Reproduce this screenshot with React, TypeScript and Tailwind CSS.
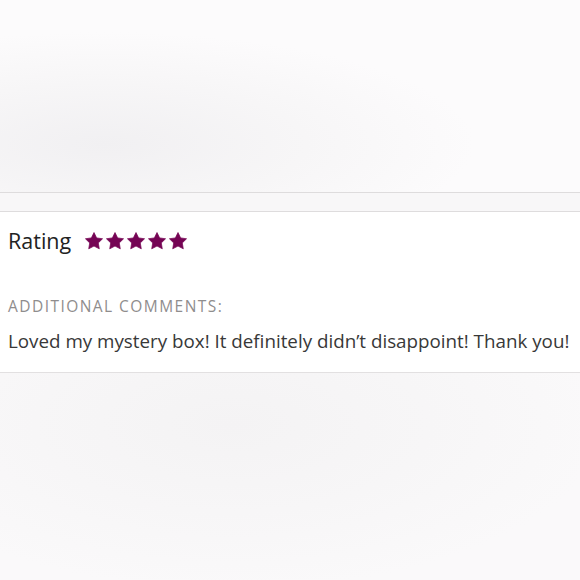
const font = { fontFamily: '"Open Sans", "Liberation Sans", Arial, sans-serif' }

// five-point star, fairly plump
const starPoints = Array.from({ length: 10 }, (_, i) => {
  const r = i % 2 === 0 ? 10 : 5
  const a = (Math.PI / 5) * i - Math.PI / 2
  return `${(10 + r * Math.cos(a)).toFixed(2)},${(10.6 + r * Math.sin(a)).toFixed(2)}`
}).join(' ')

function Stars() {
  return (
    <div className="flex items-center gap-[3px]">
      {[0, 1, 2, 3, 4].map((i) => (
        <svg key={i} width="18" height="18" viewBox="0 0 20 20" className="text-[#750454]">
          <polygon fill="currentColor" stroke="currentColor" strokeWidth="0.8" strokeLinejoin="round" points={starPoints} />
        </svg>
      ))}
    </div>
  )
}

export default function App() {
  return (
    <div className="w-[580px] h-[580px] overflow-hidden flex flex-col bg-[#faf9fa]" style={font}>
      <div className="h-[192px] bg-[radial-gradient(ellipse_at_18%_75%,#f1f0f2_0%,#f7f6f7_30%,#fcfbfc_55%)]" />
      <div className="h-[20px] border-y border-[#dedcdd] bg-[#f8f7f8]" />
      <div className="bg-white px-2 pt-[14px] pb-[20px] border-b border-[#e2e0e1]">
        <div className="flex items-center gap-[14px] h-[30px]">
          <span className="text-[21.5px] text-[#222]">Rating</span>
          <Stars />
        </div>
        <div className="mt-[40px] text-[15.5px] tracking-[1.45px] text-[#8f8d8d] uppercase leading-[20px]">
          Additional comments:
        </div>
        <div className="mt-[14px] text-[18.8px] text-[#383838] leading-[22px] whitespace-nowrap">
          Loved my mystery box! It definitely didn’t disappoint! Thank you!
        </div>
      </div>
      <div className="flex-1 bg-[radial-gradient(ellipse_at_40%_25%,#f4f3f4_0%,#f7f6f7_40%,#faf9fa_75%)]" />
    </div>
  )
}
